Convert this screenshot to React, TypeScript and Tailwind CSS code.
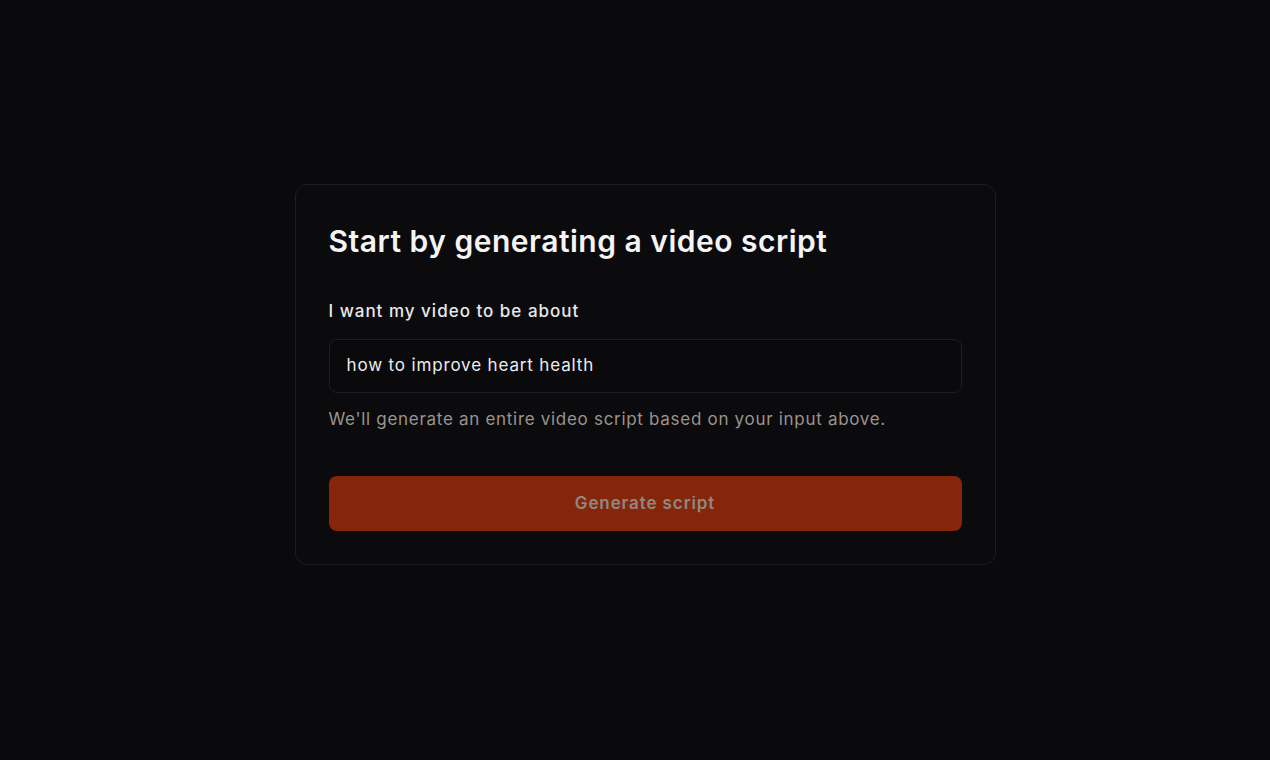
export default function App() {
	return (
		<div
			className="min-h-screen w-full bg-[#0a0a0c] flex items-start justify-center pt-[184px] pl-[20px]"
			style={{ fontFamily: 'Inter, "Liberation Sans", sans-serif' }}
		>
			<div className="w-[701px] rounded-xl border border-[#1e1e21] bg-[#0b0b0d] px-[33px] pt-[36px] pb-[33px]">
				{/* Header */}
				<h1 className="text-[30px] leading-[40px] font-semibold tracking-[0.5px] text-[#f4f4f5]">
					Start by generating a video script
				</h1>

				{/* Topic input */}
				<label className="block mt-[39px] text-[17px] leading-[22px] font-medium tracking-[1px] text-[#e8e8ea]">
					I want my video to be about
				</label>
				<div className="mt-[17px] h-[54px] rounded-lg border border-[#1f1f23] bg-[#0a0a0c] flex items-center px-[17px]">
					<span className="text-[17px] tracking-[0.85px] text-[#ececee]">
						how to improve heart health
					</span>
				</div>
				<p className="mt-[15px] text-[17px] leading-[22px] tracking-[0.7px] text-[#9a948e]">
					We'll generate an entire video script based on your input above.
				</p>

				{/* Submit */}
				<button className="mt-[46px] w-full h-[55px] rounded-lg bg-[#85260a] text-[17px] font-semibold tracking-[0.9px] text-[#8f8883]">
					Generate script
				</button>
			</div>
		</div>
	)
}
